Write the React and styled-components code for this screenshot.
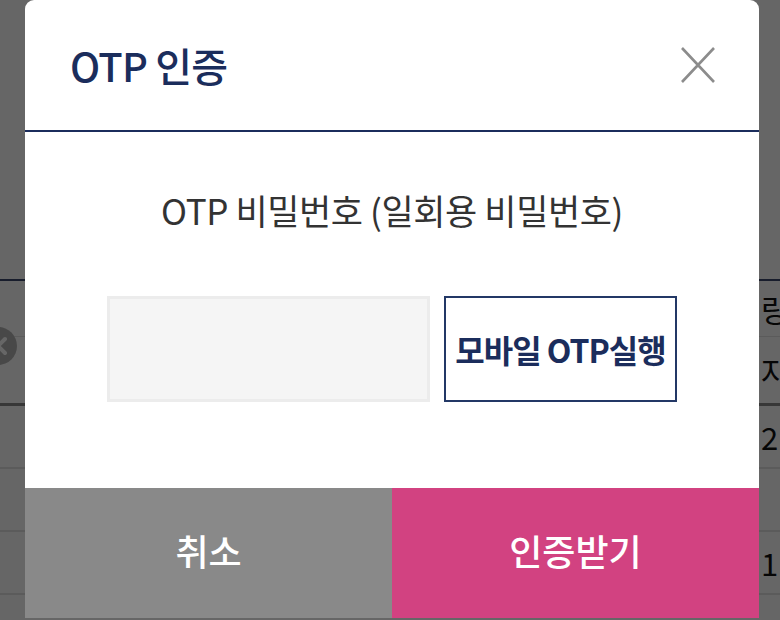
import React from 'react';
import styled, { createGlobalStyle } from 'styled-components';

const GlobalStyle = createGlobalStyle`
    html, body {
        margin: 0;
        padding: 0;
        width: 780px;
        height: 620px;
        overflow: hidden;
        background: #ffffff;
        font-family: "Noto Sans CJK KR", "Noto Sans", sans-serif;
    }
`;

const navy = '#1b2d5c';

//rows of the page behind the dialog
const bgRows = [
    { h: 281, text: '', line: '2px solid #3c4a6e' },
    { h: 56, text: '량', line: '1px solid #e4e4e4' },
    { h: 69, text: '자', line: '3px solid #8a8a8a' },
    { h: 63, text: '2', line: '2px solid #e4e4e4' },
    { h: 63, text: '', line: '2px solid #e4e4e4' },
    { h: 63, text: '1', line: '2px solid #e4e4e4' },
    { h: 20, text: '', line: 'none' },
];

function App(){
    return (<Page>
                <GlobalStyle />
                <BackTable>
                    {bgRows.map((r, i) => (
                        <BackRow key={i} $h={r.h} $line={r.line}>
                            <span />
                            <BackCell>{r.text}</BackCell>
                        </BackRow>
                    ))}
                </BackTable>
                <RemoveBadge>
                    <svg width="38" height="38" viewBox="0 0 38 38">
                        <circle cx="19" cy="19" r="19" fill="#b4b4b4" />
                        <path d="M12 12 L26 26 M26 12 L12 26" stroke="#fff" strokeWidth="4" strokeLinecap="round" />
                    </svg>
                </RemoveBadge>
                <Overlay>
                    <Dialog>
                        <Header>
                            <Title>OTP 인증</Title>
                            <CloseButton aria-label="닫기">
                                <svg width="36" height="38" viewBox="0 0 36 38">
                                    <path d="M2 2 L34 36 M34 2 L2 36" stroke="#8c8c8c" strokeWidth="2.6" />
                                </svg>
                            </CloseButton>
                        </Header>
                        <Body>
                            <Label>OTP 비밀번호 (일회용 비밀번호)</Label>
                            <InputRow>
                                <OtpInput type="password" />
                                <MobileButton>모바일 OTP실행</MobileButton>
                            </InputRow>
                        </Body>
                        <Footer>
                            <FooterButton $bg="#898989">취소</FooterButton>
                            <FooterButton $bg="#d24281">인증받기</FooterButton>
                        </Footer>
                    </Dialog>
                </Overlay>
            </Page>);
}

const Page = styled.div`
    position: relative;
    width: 780px;
    height: 620px;
    overflow: hidden;
`;

const BackTable = styled.div`
    display: flex;
    flex-direction: column;
`;

const BackRow = styled.div`
    display: grid;
    grid-template-columns: 761px 1fr;
    align-items: center;
    height: ${p => p.$h}px;
    flex-shrink: 0;
    border-bottom: ${p => p.$line};
    box-sizing: border-box;
`;

const BackCell = styled.div`
    font-size: 31px;
    color: #111;
    white-space: nowrap;
`;

const RemoveBadge = styled.div`
    position: absolute;
    left: -21px;
    top: 327px;
    width: 38px;
    height: 38px;
`;

const Overlay = styled.div`
    position: absolute;
    inset: 0;
    background: rgba(0, 0, 0, 0.6);
    padding-left: 25px;
`;

const Dialog = styled.div`
    width: 734px;
    height: 618px;
    background: #fff;
    border-radius: 9px 9px 0 0;
    overflow: hidden;
    display: flex;
    flex-direction: column;
`;

const Header = styled.div`
    height: 130px;
    flex-shrink: 0;
    display: flex;
    align-items: center;
    justify-content: space-between;
    padding: 0 43px 0 45px;
    border-bottom: 2px solid ${navy};
`;

const Title = styled.h2`
    margin: 0;
    font-size: 40px;
    font-weight: 500;
    color: ${navy};
    letter-spacing: -0.8px;
`;

const CloseButton = styled.button`
    border: none;
    background: none;
    padding: 0;
    width: 36px;
    height: 38px;
    display: flex;
`;

const Body = styled.div`
    flex: 1;
    display: flex;
    flex-direction: column;
    align-items: center;
    padding-top: 57px;
`;

const Label = styled.div`
    font-size: 35px;
    line-height: 42px;
    color: #333;
    letter-spacing: -0.4px;
`;

const InputRow = styled.div`
    margin-top: 65px;
    display: flex;
    gap: 14px;
    height: 106px;
`;

const OtpInput = styled.input`
    width: 323px;
    height: 100%;
    box-sizing: border-box;
    background: #f5f5f5;
    border: 3px solid #ececec;
    outline: none;
    font-size: 30px;
`;

const MobileButton = styled.button`
    width: 233px;
    height: 100%;
    box-sizing: border-box;
    background: #fff;
    border: 2px solid #233866;
    color: ${navy};
    font-family: "Noto Sans CJK KR", "Noto Sans", sans-serif;
    font-size: 32px;
    font-weight: 700;
    letter-spacing: -1px;
    padding: 0;
    white-space: nowrap;
`;

const Footer = styled.div`
    height: 130px;
    flex-shrink: 0;
    display: grid;
    grid-template-columns: 1fr 1fr;
`;

const FooterButton = styled.button`
    border: none;
    background: ${p => p.$bg};
    color: #fff;
    font-family: "Noto Sans CJK KR", "Noto Sans", sans-serif;
    font-size: 36px;
    font-weight: 500;
    padding: 0 0 6px;
`;

export default App;
